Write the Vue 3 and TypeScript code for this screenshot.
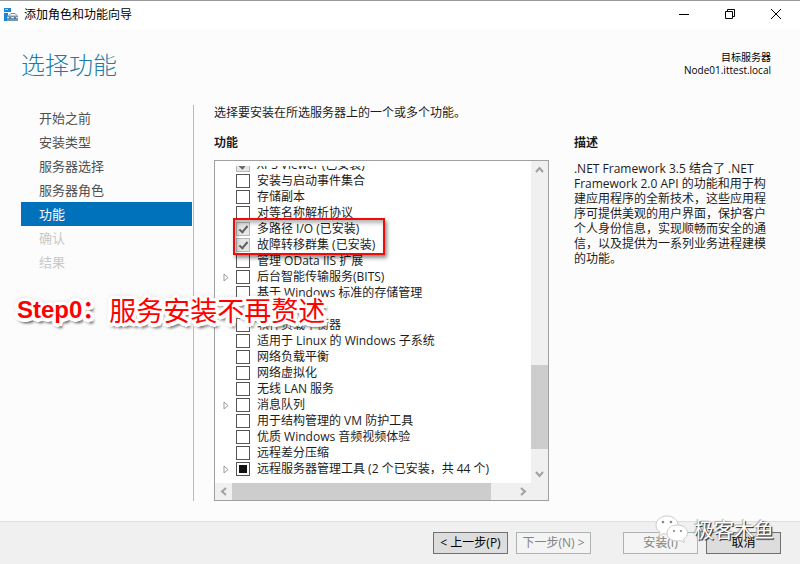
<script setup lang="ts">
import { ref } from 'vue'

type CheckState = 'off' | 'installed' | 'partial'

interface Feature {
  name: string
  state: CheckState
  expandable?: boolean
}

interface Step {
  name: string
  status: 'open' | 'active' | 'disabled'
}

const steps: Step[] = [
  { name: '开始之前', status: 'open' },
  { name: '安装类型', status: 'open' },
  { name: '服务器选择', status: 'open' },
  { name: '服务器角色', status: 'open' },
  { name: '功能', status: 'active' },
  { name: '确认', status: 'disabled' },
  { name: '结果', status: 'disabled' },
]

const features = ref<Feature[]>([
  { name: 'XPS Viewer (已安装)', state: 'installed' },
  { name: '安装与启动事件集合', state: 'off' },
  { name: '存储副本', state: 'off' },
  { name: '对等名称解析协议', state: 'off' },
  { name: '多路径 I/O (已安装)', state: 'installed' },
  { name: '故障转移群集 (已安装)', state: 'installed' },
  { name: '管理 OData IIS 扩展', state: 'off' },
  { name: '后台智能传输服务(BITS)', state: 'off', expandable: true },
  { name: '基于 Windows 标准的存储管理', state: 'off' },
  { name: '容器', state: 'off' },
  { name: '软件负载平衡器', state: 'off' },
  { name: '适用于 Linux 的 Windows 子系统', state: 'off' },
  { name: '网络负载平衡', state: 'off' },
  { name: '网络虚拟化', state: 'off' },
  { name: '无线 LAN 服务', state: 'off' },
  { name: '消息队列', state: 'off', expandable: true },
  { name: '用于结构管理的 VM 防护工具', state: 'off' },
  { name: '优质 Windows 音频视频体验', state: 'off' },
  { name: '远程差分压缩', state: 'off' },
  { name: '远程服务器管理工具 (2 个已安装，共 44 个)', state: 'partial', expandable: true },
])
</script>

<template>
  <div class="window">
    <header class="titlebar">
      <svg class="app-icon" viewBox="0 0 14 14" aria-hidden="true">
        <path d="M0 0h7v4H0zM0 5h4v8H0z" fill="#1688d8" />
        <path d="M1 1.500h3" stroke="#a6d4f5" />
        <path d="M5 7.500l2-2h4l2 2" fill="none" stroke="#6f8ea5" />
        <path d="M3 7.500h11V13H3z" fill="#7897ad" />
        <path d="M3 9.500h11" stroke="#d8e3ea" />
        <path d="M5 9h2v2H5zM10 9h2v2h-2z" fill="#5f7e94" />
      </svg>
      <span class="caption">添加角色和功能向导</span>
      <div class="controls">
        <button type="button" aria-label="最小化">
          <svg viewBox="0 0 12 12"><path d="M1 6.500h10" /></svg>
        </button>
        <button type="button" aria-label="还原">
          <svg viewBox="0 0 12 12"><path d="M1.500 3.500h7v7h-7zM3.500 3.500v-2h7v7h-2" /></svg>
        </button>
        <button type="button" aria-label="关闭">
          <svg viewBox="0 0 12 12"><path d="M1 1l10 10M11 1L1 11" /></svg>
        </button>
      </div>
    </header>

    <div class="heading">
      <h1>选择功能</h1>
      <p class="target">目标服务器<br />Node01.ittest.local</p>
    </div>

    <main class="body">
      <nav class="steps">
        <a
          v-for="step in steps"
          :key="step.name"
          href="#"
          :class="step.status"
          @click.prevent
        >{{ step.name }}</a>
      </nav>

      <section class="content">
        <p class="intro">选择要安装在所选服务器上的一个或多个功能。</p>
        <div class="columns">
          <div class="features">
            <h2>功能</h2>
            <div class="list">
              <div class="viewport">
                <ul>
                  <li v-for="(feature, i) in features" :key="feature.name">
                    <span class="expander">
                      <svg v-if="feature.expandable" viewBox="0 0 6 9" aria-hidden="true">
                        <path d="M1 1l4 3.500L1 8z" />
                      </svg>
                    </span>
                    <input :id="'feature-' + i" type="checkbox" :class="feature.state" :checked="feature.state === 'installed'" />
                    <label :for="'feature-' + i">{{ feature.name }}</label>
                  </li>
                </ul>
              </div>
              <div class="vbar">
                <svg viewBox="0 0 17 17"><path d="M5 11l3.500-4 3.500 4" /></svg>
                <div class="vtrack"><div class="thumb"></div></div>
                <svg viewBox="0 0 17 17"><path d="M5 6l3.500 4L12 6" /></svg>
              </div>
              <div class="hbar">
                <svg viewBox="0 0 17 17"><path d="M11 5L7 8.500 11 12" /></svg>
                <div class="htrack"><div class="thumb"></div></div>
                <svg viewBox="0 0 17 17"><path d="M7 5l4 3.500L7 12" /></svg>
              </div>
              <div class="highlight"></div>
            </div>
          </div>
          <aside class="description">
            <h2>描述</h2>
            <p>.NET Framework 3.5 结合了 .NET Framework 2.0 API 的功能和用于构建应用程序的全新技术，这些应用程序可提供美观的用户界面，保护客户个人身份信息，实现顺畅而安全的通信，以及提供为一系列业务进程建模的功能。</p>
          </aside>
        </div>
      </section>
    </main>

    <footer class="footer">
      <button type="button">&lt; 上一步(P)</button>
      <button type="button" disabled>下一步(N) &gt;</button>
      <button type="button" class="install" disabled>安装(I)</button>
      <button type="button">取消</button>
      <div class="watermark">
        <svg viewBox="0 0 34 28" aria-hidden="true">
          <path d="M12 1C5.500 1 1 5 1 10c0 3 1.500 5.500 4 7l-1 4 4-2.500c1.500.5 3 .5 5 .5 6-.5 10-4 10-9S18 1 12 1z" />
          <path d="M22 10c-5.500 0-10 3.500-10 8s4.500 8 10 8c1.200 0 2.500-.2 3.500-.5l4 2-1-3.300c2.500-1.500 4-3.700 4-6.200 0-4.500-4.500-8-10.500-8z" />
          <g class="eyes">
            <circle cx="8" cy="7" r="1.300" /><circle cx="16" cy="7" r="1.300" />
            <circle cx="19" cy="16" r="1.100" /><circle cx="26" cy="16" r="1.100" />
          </g>
        </svg>
        <span>极客木鱼</span>
      </div>
    </footer>

    <div class="annotation"><b>Step0：</b><span>服务安装不再赘述</span></div>
  </div>
</template>

<style>
body {
  margin: 0;
}
</style>

<style scoped>
.window {
  position: relative;
  display: flex;
  flex-direction: column;
  box-sizing: border-box;
  min-height: 100vh;
  border-top: 1px solid #999;
  background: #fcfcfc;
  color: #1c1c1c;
  font: 12px/16px "Open Sans", "Noto Sans CJK SC", sans-serif;
}
h1, h2, p, ul {
  margin: 0;
  padding: 0;
}
button {
  font: inherit;
}
.titlebar {
  display: flex;
  align-items: center;
  height: 28px;
  padding-left: 4px;
  background: #fff;
  color: #000;
}
.app-icon {
  width: 14px;
  height: 14px;
}
.caption {
  margin-left: 6px;
}
.controls {
  display: flex;
  margin-left: auto;
}
.controls button {
  width: 46px;
  height: 28px;
  padding: 0 2px 2px 0;
  border: 0;
  background: none;
}
.controls svg {
  display: block;
  width: 12px;
  height: 12px;
  margin: 0 auto;
  fill: none;
  stroke: #000;
}
.heading {
  display: flex;
  justify-content: space-between;
  padding: 20px 29px 0 21px;
  height: 56px;
}
h1 {
  color: #1b7da6;
  font-size: 24px;
  line-height: 32px;
  font-weight: 300;
}
.target {
  padding-top: 2px;
  color: #000;
  font-size: 10px;
  line-height: 13px;
  text-align: right;
}
.body {
  display: flex;
  flex: 1;
  padding: 0 29px 20px 21px;
}
.steps {
  width: 171px;
  padding: 1px 1px 0 0;
  border-right: 1px solid #bbb;
}
.steps a {
  display: block;
  padding-left: 18px;
  color: #505050;
  font-size: 13px;
  line-height: 24px;
  text-decoration: none;
}
.steps .active {
  background: #0072bc;
  color: #fff;
}
.steps .disabled {
  color: #c8c8c8;
}
.content {
  display: flex;
  flex: 1;
  flex-direction: column;
  margin-left: 20px;
}
.columns {
  display: grid;
  flex: 1;
  grid-template-columns: 17fr 10fr;
  column-gap: 25px;
  margin-top: 14px;
}
.features {
  display: flex;
  flex-direction: column;
}
h2 {
  font-size: 12px;
  line-height: 16px;
  font-weight: 700;
}
.list {
  position: relative;
  display: grid;
  flex: 1;
  grid-template-columns: 1fr 17px;
  grid-template-rows: 1fr 17px;
  margin-top: 9px;
  border: 1px solid #a0a0a0;
  background: #fff;
}
.viewport {
  margin: 5px 0 0;
  overflow: hidden;
}
.viewport ul {
  margin-top: -9px;
  list-style: none;
}
.viewport li {
  display: flex;
  align-items: center;
  height: 16px;
  white-space: nowrap;
}
.expander {
  display: flex;
  width: 13px;
  padding-left: 8px;
}
.expander svg {
  width: 6px;
  height: 9px;
  fill: #fff;
  stroke: #999;
}
.viewport input {
  appearance: none;
  display: grid;
  place-items: center;
  box-sizing: border-box;
  width: 14px;
  height: 14px;
  margin: 0;
  border: 1px solid #555;
  background: #fff;
}
.viewport .installed {
  border-color: #b8b8b8;
  background: #e6e6e6;
}
.installed::after {
  content: "";
  width: 3px;
  height: 7px;
  margin-bottom: 2px;
  border: solid #606060;
  border-width: 0 2px 2px 0;
  transform: rotate(40deg);
}
.partial::after {
  content: "";
  width: 8px;
  height: 8px;
  background: #111;
}
.viewport label {
  margin-left: 7px;
}
.vbar {
  display: flex;
  flex-direction: column;
  background: #f0f0f0;
}
.hbar {
  display: flex;
  grid-column: 1 / 3;
  padding-right: 17px;
  background: #f0f0f0;
}
.vbar svg, .hbar svg {
  flex: none;
  width: 17px;
  height: 17px;
  fill: none;
  stroke: #a0a0a0;
  stroke-width: 2;
}
.thumb {
  background: #cdcdcd;
}
.vtrack {
  display: flex;
  flex: 1;
  flex-direction: column;
  justify-content: flex-end;
  padding-bottom: 17px;
}
.vtrack .thumb {
  height: 31%;
}
.htrack {
  flex: 1;
}
.htrack .thumb {
  width: 92%;
  height: 17px;
}
.highlight {
  position: absolute;
  top: 57px;
  left: 18px;
  width: 148px;
  height: 33px;
  border: 2px solid #f00a0a;
  box-shadow: 2px 3px 4px rgba(0, 0, 0, 0.45), inset 2px 3px 4px rgba(0, 0, 0, 0.3);
}
.description p {
  margin-top: 10px;
  line-height: 15px;
}
.footer {
  position: relative;
  display: flex;
  justify-content: flex-end;
  gap: 8px;
  padding: 10px 19px;
  border-top: 1px solid #dfdfdf;
  background: #f0f0f0;
}
.footer button {
  width: 75px;
  height: 22px;
  padding: 0;
  border: 1px solid #707070;
  background: #ddd;
  color: #000;
  line-height: 20px;
  white-space: nowrap;
}
.footer button:disabled {
  border-color: #adb2b5;
  background: #f4f4f4;
  color: #838383;
}
.footer .install {
  margin-left: 24px;
}
.watermark {
  position: absolute;
  top: -7px;
  right: 26px;
  display: flex;
  gap: 5px;
  color: #fff;
  font-size: 20px;
  line-height: 32px;
  text-shadow: 1px 1px 1px #333, 1px 1px 0 #777, -1px -1px 1px #aaa;
}
.watermark svg {
  width: 34px;
  height: 28px;
  fill: #fff;
  stroke: #ccc;
}
.watermark .eyes {
  fill: #888;
  stroke: none;
}
.annotation {
  position: absolute;
  top: 291px;
  left: 17px;
  display: flex;
  align-items: center;
  gap: 3px;
  color: #f00;
  font-size: 27px;
  line-height: 36px;
  white-space: nowrap;
  text-shadow:
    3px 0 #fff, -3px 0 #fff, 0 3px #fff, 0 -3px #fff,
    2px 2px #fff, -2px 2px #fff, 2px -2px #fff, -2px -2px #fff,
    3px 1px #fff, -3px 1px #fff, 3px -1px #fff, -3px -1px #fff,
    1px 3px #fff, -1px 3px #fff, 1px -3px #fff, -1px -3px #fff,
    4px 0 #fff, -4px 0 #fff, 0 4px #fff, 3px 3px #fff, -3px 3px #fff,
    3px 5px 3px #555, 0 4px 3px #888, 0 0 6px #888;
}
.annotation b {
  font: bold 24px/36px "Liberation Sans", "Noto Sans CJK SC", sans-serif;
}
.annotation span {
  font-family: "Noto Sans CJK SC", sans-serif;
  font-weight: 400;
}
</style>
